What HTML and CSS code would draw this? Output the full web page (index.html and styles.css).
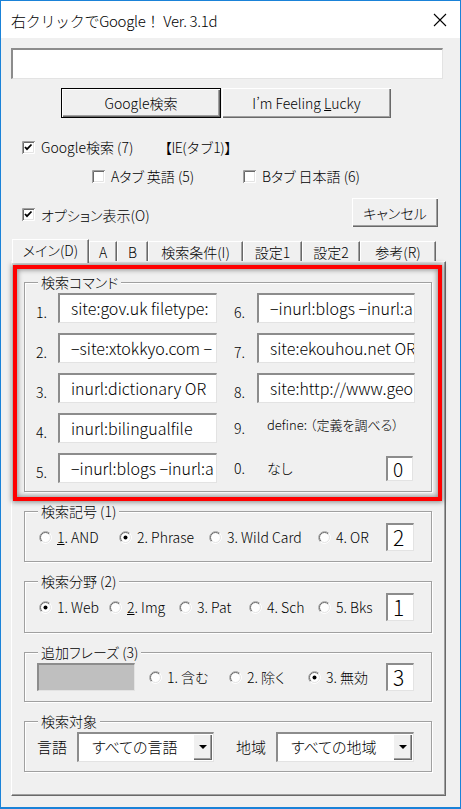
FILE: index.html
```html
<!DOCTYPE html>
<html lang="ja">
<head>
<meta charset="utf-8">
<title>右クリックでGoogle！ Ver. 3.1d</title>
<link rel="stylesheet" href="styles.css">
</head>
<body>
<svg class="defs" width="0" height="0" aria-hidden="true">
  <defs>
    <symbol id="cbox" viewBox="0 0 13 13">
      <rect x="1" y="1" width="11" height="11" fill="#fff"/>
      <path d="M0.5 13V0.5H13" fill="none" stroke="#a0a0a0"/>
      <path d="M1.5 12V1.5H12" fill="none" stroke="#696969"/>
      <path d="M1 12.5H12.5V1" fill="none" stroke="#fff"/>
      <path d="M2 11.5H11.5V2" fill="none" stroke="#e3e3e3"/>
    </symbol>
    <symbol id="rad" viewBox="0 0 13 13">
      <circle cx="6.5" cy="6.5" r="6" fill="#fff"/>
      <path d="M2.26 10.74A6 6 0 0 1 10.74 2.26" fill="none" stroke="#a0a0a0"/>
      <path d="M2.96 10.04A5 5 0 0 1 10.04 2.96" fill="none" stroke="#696969"/>
      <path d="M10.74 2.26A6 6 0 0 1 2.26 10.74" fill="none" stroke="#fff"/>
      <path d="M10.04 2.96A5 5 0 0 1 2.96 10.04" fill="none" stroke="#e3e3e3"/>
    </symbol>
  </defs>
</svg>

<div class="window">
  <div class="titlebar">
    <span class="title">右クリックでGoogle！ Ver. 3.1d</span>
    <svg class="close" viewBox="0 0 14 14"><path d="M1 1L13 13M13 1L1 13" stroke="#000" stroke-width="1.1" fill="none"/></svg>
  </div>

  <div class="main">
    <div class="edit search"></div>

    <div class="btnrow">
      <div class="btn default">Google検索</div>
      <div class="btn lucky"><span>I’m Feeling&nbsp;<u>L</u>ucky</span></div>
    </div>

    <div class="crow r1">
      <span class="chk w1"><svg class="cb" viewBox="0 0 13 13"><use href="#cbox"/><path d="M3 6l2 2.2 4.5-4.7" stroke="#000" stroke-width="1.8" fill="none"/></svg>Google検索 (7)</span>
      <span class="ie">【IE(タブ1)】</span>
    </div>

    <div class="crow r2">
      <span class="chk w2"><svg class="cb" viewBox="0 0 13 13"><use href="#cbox"/></svg>Aタブ 英語 (5)</span>
      <span class="chk"><svg class="cb" viewBox="0 0 13 13"><use href="#cbox"/></svg>Bタブ 日本語 (6)</span>
    </div>

    <div class="crow r3">
      <span class="chk opt"><svg class="cb" viewBox="0 0 13 13"><use href="#cbox"/><path d="M3 6l2 2.2 4.5-4.7" stroke="#000" stroke-width="1.8" fill="none"/></svg>オプション表示(O)</span>
      <div class="btn cancel">キャンセル</div>
    </div>

    <div class="tabs">
      <div class="tab sel t1">メイン(D)</div>
      <div class="tab t2">A</div>
      <div class="tab t3">B</div>
      <div class="tab t4">検索条件(I)</div>
      <div class="tab t5">設定1</div>
      <div class="tab t6">設定2</div>
      <div class="tab t7">参考(R)</div>
    </div>

    <div class="panel">
      <div class="group g1">
        <div class="legend">検索コマンド</div>
        <div class="cmdgrid">
          <div class="cell"><span class="num">1.</span><div class="edit cmd">site:gov.uk filetype:</div></div>
          <div class="cell"><span class="num">2.</span><div class="edit cmd">−site:xtokkyo.com −</div></div>
          <div class="cell"><span class="num">3.</span><div class="edit cmd">inurl:dictionary OR</div></div>
          <div class="cell"><span class="num">4.</span><div class="edit cmd">inurl:bilingualfile</div></div>
          <div class="cell"><span class="num">5.</span><div class="edit cmd">−inurl:blogs −inurl:a</div></div>
          <div class="cell"><span class="num r">6.</span><div class="edit cmd r">−inurl:blogs −inurl:a</div></div>
          <div class="cell"><span class="num r">7.</span><div class="edit cmd r">site:ekouhou.net OR</div></div>
          <div class="cell"><span class="num r">8.</span><div class="edit cmd r">site:http://www.geo</div></div>
          <div class="cell plain"><span class="num r">9.</span><span class="define">define: （定義を調べる）</span></div>
          <div class="cell plain"><span class="num r">0.</span><span class="nashi">なし</span><div class="edit digit small">0</div></div>
        </div>
      </div>

      <div class="group g2">
        <div class="legend">検索記号 (1)</div>
        <div class="gb">
          <span class="radio" style="width:80px"><svg class="rd" viewBox="0 0 13 13"><use href="#rad"/></svg><u>1</u>. AND</span>
          <span class="radio" style="width:90px"><svg class="rd" viewBox="0 0 13 13"><use href="#rad"/><circle cx="6.5" cy="6.5" r="2" fill="#000"/></svg>2. Phrase</span>
          <span class="radio" style="width:109px"><svg class="rd" viewBox="0 0 13 13"><use href="#rad"/></svg>3. Wild Card</span>
          <span class="radio" style="width:68px"><svg class="rd" viewBox="0 0 13 13"><use href="#rad"/></svg>4. OR</span>
          <div class="edit digit">2</div>
        </div>
      </div>

      <div class="group g3">
        <div class="legend">検索分野 (2)</div>
        <div class="gb">
          <span class="radio" style="width:70px"><svg class="rd" viewBox="0 0 13 13"><use href="#rad"/><circle cx="6.5" cy="6.5" r="2" fill="#000"/></svg>1. Web</span>
          <span class="radio" style="width:70px"><svg class="rd" viewBox="0 0 13 13"><use href="#rad"/></svg><u>2</u>. Img</span>
          <span class="radio" style="width:70px"><svg class="rd" viewBox="0 0 13 13"><use href="#rad"/></svg>3. Pat</span>
          <span class="radio" style="width:69px"><svg class="rd" viewBox="0 0 13 13"><use href="#rad"/></svg>4. Sch</span>
          <span class="radio" style="width:68px"><svg class="rd" viewBox="0 0 13 13"><use href="#rad"/></svg>5. Bks</span>
          <div class="edit digit">1</div>
        </div>
      </div>

      <div class="group g4">
        <div class="legend">追加フレーズ (3)</div>
        <div class="gb gb4">
          <div class="edit disabled"></div>
          <span class="radio" style="width:80px"><svg class="rd" viewBox="0 0 13 13"><use href="#rad"/></svg>1. 含む</span>
          <span class="radio" style="width:79px"><svg class="rd" viewBox="0 0 13 13"><use href="#rad"/></svg>2. 除く</span>
          <span class="radio" style="width:78px"><svg class="rd" viewBox="0 0 13 13"><use href="#rad"/><circle cx="6.5" cy="6.5" r="2" fill="#000"/></svg>3. 無効</span>
          <div class="edit digit">3</div>
        </div>
      </div>

      <div class="group g5">
        <div class="legend">検索対象</div>
        <div class="gb gb5">
          <span class="flabel">言語</span>
          <div class="edit select s1"><span class="stext">すべての言語</span><span class="dd"><svg viewBox="0 0 8 4"><path d="M0 0H8L4 4Z" fill="#000"/></svg></span></div>
          <span class="flabel l2">地域</span>
          <div class="edit select s2"><span class="stext">すべての地域</span><span class="dd"><svg viewBox="0 0 8 4"><path d="M0 0H8L4 4Z" fill="#000"/></svg></span></div>
        </div>
      </div>

      <div class="highlight"></div>
    </div>
  </div>
</div>
</body>
</html>
```

FILE: styles.css
```css
* { box-sizing: border-box; }
html, body { margin: 0; padding: 0; background: #fff; }
body {
  font-family: "Noto Sans CJK JP", "Noto Sans", sans-serif;
  font-size: 14px;
  font-weight: 300;
  color: #000;
  font-feature-settings: "palt";
}
.defs { position: absolute; width: 0; height: 0; overflow: hidden; }

.window {
  width: 461px;
  height: 809px;
  border: 1px solid #1a82d8;
  border-bottom-width: 2px;
  background: #f0f0f0;
  display: flex;
  flex-direction: column;
}

.titlebar {
  flex: none;
  height: 37px;
  background: #fff;
  display: flex;
  align-items: center;
  padding: 0 13px 0 10px;
}
.title { flex: 1; font-size: 15px; line-height: 20px; padding-top: 2px; font-feature-settings: normal; letter-spacing: -0.3px; }
.close { width: 14px; height: 14px; }

.main { flex: 1; padding: 0 17px 0 10px; }

.edit {
  background: #fff;
  border-style: solid;
  border-width: 2px 1px 1px 2px;
  border-color: #8c8c8c #e3e3e3 #e3e3e3 #8c8c8c;
  overflow: hidden;
  white-space: nowrap;
}
.search { margin-top: 10px; width: 432px; height: 31px; }

.btnrow { display: flex; gap: 1px; margin: 9px 0 0 50px; }
.btn {
  height: 30px;
  display: flex;
  align-items: center;
  justify-content: center;
  background: #f0f0f0;
  line-height: 18px;
  box-shadow: inset 1px 1px 0 #fff, inset -1px -1px 0 #696969, inset -2px -2px 0 #a0a0a0;
}
.btn.default { width: 160px; border: 1px solid #000; }
.btn.lucky { width: 169px; font-feature-settings: normal; }
.btn.cancel { width: 86px; height: 29px; margin-left: auto; margin-right: 5px; }

.crow { display: flex; align-items: center; height: 22px; line-height: 18px; }
.r1 { margin: 18px 0 0 11px; }
.r2 { margin: 7px 0 0 81px; }
.r3 { margin: 11px 0 0 11px; height: 29px; }
.chk { display: flex; align-items: center; white-space: nowrap; }
.cb { width: 13px; height: 13px; flex: none; margin-right: 6px; }
.w1 { width: 136px; }
.w2 { width: 151px; }
.opt { padding-top: 4px; }
.ie { font-feature-settings: normal; letter-spacing: -0.5px; }

.tabs {
  display: flex;
  align-items: flex-end;
  height: 22px;
  margin: 12px 0 0 1px;
  position: relative;
  z-index: 1;
}
.tab {
  height: 20px;
  display: flex;
  align-items: center;
  justify-content: center;
  background: #f0f0f0;
  border-top: 1px solid #fff;
  border-left: 1px solid #fff;
  border-right: 1px solid #696969;
  box-shadow: inset -1px 0 0 #a0a0a0;
  line-height: 18px;
  white-space: nowrap;
}
.tab.sel { height: 24px; margin-bottom: -2px; padding-bottom: 3px; }
.t1 { width: 77px; }
.t2 { width: 28px; }
.t3 { width: 31px; }
.t4 { width: 95px; }
.t5 { width: 59px; }
.t6 { width: 58px; }
.t7 { width: 76px; }

.panel {
  position: relative;
  width: 435px;
  height: 535px;
  border-style: solid;
  border-width: 1px;
  border-color: #fff #696969 #696969 #fff;
  box-shadow: inset -1px -1px 0 #a0a0a0;
  padding-left: 12px;
}

.group {
  width: 408px;
  border: 1px solid #a0a0a0;
  box-shadow: inset 1px 1px 0 #fff, 1px 1px 0 #fff;
  margin-top: 19px;
}
.g1 { margin-top: 20px; }
.legend {
  display: table;
  margin: -9px 0 -7px 13px;
  padding: 0 3px;
  line-height: 16px;
  background: #f0f0f0;
  white-space: nowrap;
}

.cmdgrid {
  display: grid;
  grid-template-columns: 181px 181px;
  grid-template-rows: repeat(5, 30px);
  grid-auto-flow: column;
  column-gap: 17px;
  row-gap: 10px;
  padding: 10px 0 8px 11px;
}
.cell { display: flex; align-items: center; }
.num { width: 22px; flex: none; padding-top: 8px; font-size: 14px; line-height: 16px; }
.num.r { width: 23px; }
.plain .num { padding-top: 0; }
.cmd {
  width: 159px;
  height: 30px;
  font-size: 16px;
  line-height: 26px;
  padding-left: 11px;
  text-overflow: clip;
}
.cmd.r { width: 158px; }
.define { margin-left: 10px; font-size: 13px; line-height: 16px; margin-top: -6px; white-space: nowrap; }
.nashi { margin-left: 10px; line-height: 16px; }

.digit {
  width: 28px;
  height: 28px;
  font-size: 21px;
  line-height: 24px;
  padding-left: 5px;
  flex: none;
}
.digit.small { width: 27px; height: 25px; font-size: 19px; line-height: 21px; margin-left: auto; margin-right: 2px; }

.gb { display: flex; align-items: center; padding: 11px 0 10px 14px; line-height: 18px; }
.g3 .gb { padding-bottom: 11px; }
.gb4 { padding: 10px 0 10px 12px; }
.gb5 { padding: 10px 0 9px 12px; }
.radio { display: flex; align-items: center; white-space: nowrap; flex: none; }
.rd { width: 13px; height: 13px; margin-right: 5px; flex: none; }

.disabled { width: 98px; height: 28px; background: #bfbfbf; margin-right: 14px; }

.flabel { width: 40px; font-size: 15px; line-height: 18px; flex: none; }
.l2 { margin-left: 22px; }
.select {
  height: 30px;
  display: flex;
  align-items: stretch;
  font-size: 15px;
  line-height: 26px;
}
.s1 { width: 137px; }
.s2 { width: 138px; }
.stext { flex: 1; padding-left: 13px; overflow: hidden; }
.dd {
  width: 19px;
  margin: 0 1px 1px 0;
  background: #f0f0f0;
  display: flex;
  align-items: center;
  justify-content: center;
  box-shadow: inset 1px 1px 0 #fff, inset -1px -1px 0 #696969, inset -2px -2px 0 #a0a0a0;
}
.dd svg { width: 8px; height: 4px; }

.highlight {
  position: absolute;
  left: 1px;
  top: 3px;
  width: 429px;
  height: 236px;
  border: 4px solid #f00;
  box-shadow: 0 0 5px 1px rgba(0, 0, 0, 0.45), inset 0 0 5px 1px rgba(0, 0, 0, 0.4);
  pointer-events: none;
}
```
